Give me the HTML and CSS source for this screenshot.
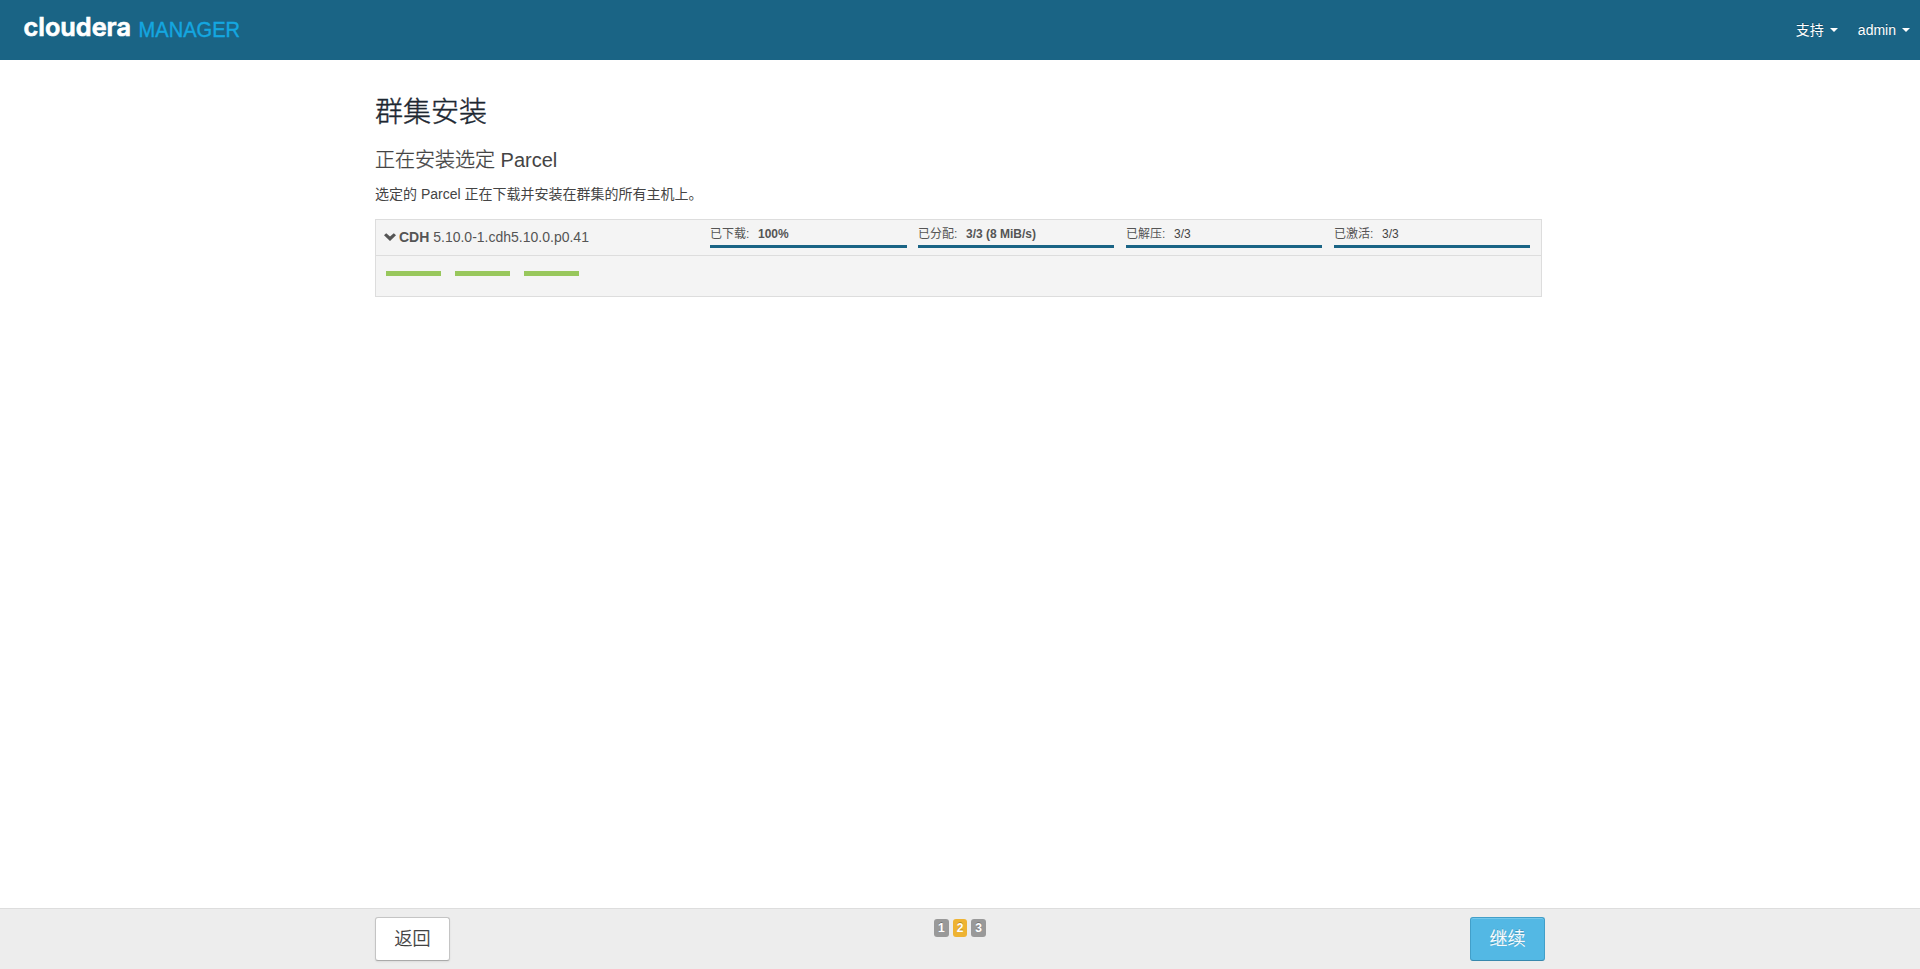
FILE: index.html
```html
<!DOCTYPE html>
<html lang="zh-CN">
<head>
<meta charset="utf-8">
<title>群集安装 - Cloudera Manager</title>
<link rel="stylesheet" href="styles.css">
</head>
<body>
<header class="navbar">
  <svg class="logo" width="226" height="40" viewBox="0 0 226 40" role="img" aria-label="cloudera MANAGER">
    <text class="logo-brand" x="-0.5" y="24.3" textLength="107.5" lengthAdjust="spacingAndGlyphs">cloudera</text>
    <text class="logo-product" x="114.6" y="24.6" textLength="101.4" lengthAdjust="spacingAndGlyphs">MANAGER</text>
  </svg>
  <nav class="menu">
    <a class="menu-item">支持<i class="caret"></i></a>
    <a class="menu-item">admin<i class="caret"></i></a>
  </nav>
</header>
<main class="container">
  <h1 class="title">群集安装</h1>
  <h2 class="subtitle"><span class="light">正在安装选定</span> Parcel</h2>
  <p class="intro">选定的 Parcel 正在下载并安装在群集的所有主机上。</p>
  <section class="parcel">
    <div class="parcel-head">
      <div class="parcel-name">
        <svg class="chevron" width="12" height="8" viewBox="0 0 12 8"><path d="M0 2.3 2.2 .2 6 3.6 9.8 .2 12 2.3 6 8z"/></svg>
        <span><b>CDH</b> 5.10.0-1.cdh5.10.0.p0.41</span>
      </div>
      <div class="steps">
        <div class="step"><span class="label">已下载:</span><b>100%</b></div>
        <div class="step"><span class="label">已分配:</span><b>3/3 (8 MiB/s)</b></div>
        <div class="step"><span class="label">已解压:</span><span class="count">3/3</span></div>
        <div class="step"><span class="label">已激活:</span><span class="count">3/3</span></div>
      </div>
    </div>
    <div class="hosts"><i class="host"></i><i class="host"></i><i class="host"></i></div>
  </section>
</main>
<footer class="footer">
  <div class="footer-inner">
    <button class="btn">返回</button>
    <div class="pages"><span class="page">1</span><span class="page current">2</span><span class="page">3</span></div>
    <button class="btn btn-primary">继续</button>
  </div>
</footer>
</body>
</html>
```
FILE: styles.css
```css
* { box-sizing: border-box; }
body {
  margin: 0;
  height: 969px;
  overflow: hidden;
  display: flex;
  flex-direction: column;
  background: #fff;
  color: #444;
  font: 14px/20px "Liberation Sans", "Noto Sans CJK SC", sans-serif;
}
.navbar {
  height: 60px;
  flex: none;
  display: flex;
  justify-content: space-between;
  padding: 0 10px 0 24px;
  background: #1a6485;
}
.logo { margin-top: 12px; overflow: visible; }
.logo-brand { font: 600 25.5px Inter, sans-serif; fill: #fff; stroke: #fff; stroke-width: .7px; }
.logo-product { font: 400 21.5px "Liberation Sans", sans-serif; fill: #14a7e0; stroke: #14a7e0; stroke-width: .4px; }
.menu { display: flex; gap: 20px; padding-top: 20px; color: #fff; }
.menu-item { display: flex; height: 20px; text-shadow: 0 -1px 0 rgba(0,0,0,.25); }
.caret {
  width: 8px; height: 4px;
  margin: 8px 0 0 6px;
  border: 4px solid transparent;
  border-top-color: #fff;
  border-bottom: 0;
}
.container { width: 1170px; margin: 0 auto; flex: 1; padding-top: 33px; }
.title { margin: 0; font-size: 28px; line-height: 40px; font-weight: 300; color: #1d2731; -webkit-text-stroke: .4px; }
.subtitle { margin: 17px 0 0; font-size: 20px; line-height: 20px; font-weight: 400; }
.light { font-weight: 300; -webkit-text-stroke: .3px; }
.intro { margin: 14px 0 15px; }
.parcel { width: 1167px; height: 78px; border: 1px solid #ddd; background: #f4f4f4; color: #555; }
.parcel-head { display: flex; height: 36px; border-bottom: 1px solid #ddd; }
.parcel-name { width: 334px; flex: none; display: flex; padding: 7px 0 0 8px; gap: 3px; }
.chevron { margin-top: 6px; fill: #555; }
.steps { display: grid; grid-template-columns: repeat(3, 208px) 196px; }
.step { width: 196px; height: 28px; border-bottom: 3px solid #1a6485; padding-top: 4px; font-size: 12px; display: flex; }
.step:first-child { width: 197px; }
.label { width: 48px; white-space: nowrap; }
.count { color: #444; }
.hosts { display: flex; gap: 14px; padding: 15px 10px; }
.host { width: 55px; height: 5px; background: #98c75c; }
.footer { height: 61px; flex: none; border-top: 1px solid #ddd; background: #ededed; }
.footer-inner { width: 1170px; margin: 0 auto; padding-top: 8px; display: flex; justify-content: space-between; }
.btn {
  width: 75px; height: 44px; padding: 0;
  border: 1px solid #c4c4c4;
  border-bottom-color: #aaa;
  border-radius: 3px;
  background: #fff;
  color: #333;
  font: 300 18px/40px "Liberation Sans", "Noto Sans CJK SC", sans-serif;
  -webkit-text-stroke: .3px;
  box-shadow: 0 1px 2px rgba(0,0,0,.08);
}
.btn-primary {
  background: #53b8e4; color: #fff;
  border-color: #429fc9; border-bottom-color: #3888ad;
  text-shadow: 0 -1px 0 rgba(0,0,0,.25);
  box-shadow: inset 0 1px 0 #74c8ec;
}
.pages { display: flex; gap: 4px; padding-top: 2px; }
.page {
  width: 14.67px; height: 18px; border-radius: 3px;
  background: #999; color: #fff;
  font-size: 12px; line-height: 18px; font-weight: 700; text-align: center;
  text-shadow: 0 -1px 0 rgba(0,0,0,.25);
}
.current { background: #eeb333; }
```
